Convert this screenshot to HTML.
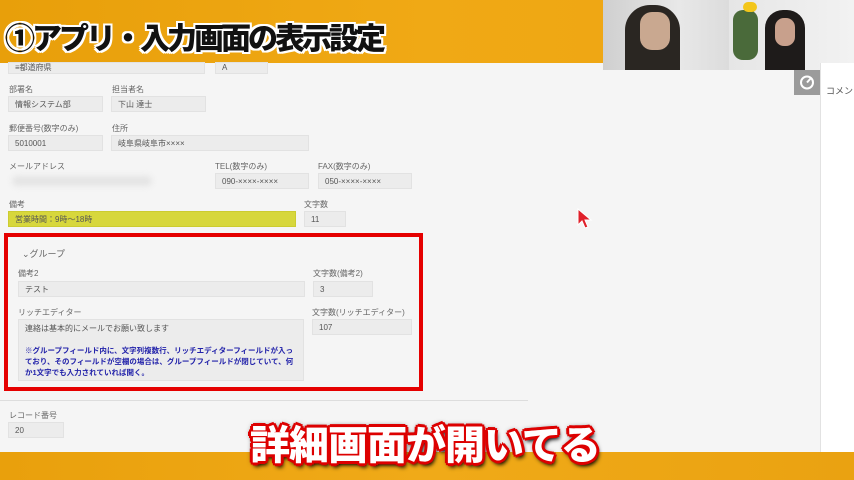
<!DOCTYPE html>
<html><head><meta charset="utf-8"><style>
*{margin:0;padding:0;box-sizing:border-box}
body{width:854px;height:480px;overflow:hidden;background:#f5f5f5;font-family:"Liberation Sans","Noto Sans CJK JP",sans-serif;position:relative;color:#555}
.a{position:absolute}
.lb{position:absolute;font-size:8px;color:#666}
.in{position:absolute;background:#ececec;border:1px solid #e2e2e2;font-size:8px;color:#555;padding:4px 6px;line-height:8px}
.ttl{font-weight:900;color:#111;text-shadow:-2px -2px 0 #fff,2px -2px 0 #fff,-2px 2px 0 #fff,2px 2px 0 #fff,0 2px 0 #fff,0 -2px 0 #fff,2px 0 0 #fff,-2px 0 0 #fff}
.cap{font-weight:900;color:#fff;text-shadow:-2px -2px 0 #d00,2px -2px 0 #d00,-2px 2px 0 #d00,2px 2px 0 #d00,0 3px 0 #d00,0 -3px 0 #d00,3px 0 0 #d00,-3px 0 0 #d00,0 0 6px #000,2px 4px 4px #000}
</style></head><body>
<div class="a" style="left:0;top:0;width:854px;height:63px;background:linear-gradient(90deg,#e89f0a,#f0a915 50%,#eda412)"></div>
<div class="a ttl" style="left:5px;top:14px;font-size:30px;letter-spacing:-3px;white-space:nowrap">①アプリ・入力画面の表示設定</div>
<div class="a" style="left:603px;top:0;width:126px;height:70px;background:linear-gradient(90deg,#cfcfcf,#e8e8e8 60%,#dcdcdc)"></div>
<div class="a" style="left:625px;top:5px;width:55px;height:65px;background:#2a2622;border-radius:25px 25px 0 0"></div>
<div class="a" style="left:640px;top:12px;width:30px;height:38px;background:#c9a890;border-radius:12px"></div>
<div class="a" style="left:729px;top:0;width:125px;height:70px;background:linear-gradient(90deg,#e6e6e6,#f2f2f2)"></div>
<div class="a" style="left:733px;top:10px;width:25px;height:50px;background:#4a6a3a;border-radius:10px"></div>
<div class="a" style="left:765px;top:10px;width:40px;height:60px;background:#1e1b1a;border-radius:18px 18px 0 0"></div>
<div class="a" style="left:775px;top:18px;width:20px;height:28px;background:#c8a08c;border-radius:9px"></div>
<div class="a" style="left:743px;top:2px;width:14px;height:10px;background:#f3c61a;border-radius:6px"></div>
<div class="a" style="left:820px;top:63px;width:34px;height:389px;background:#fff;border-left:1px solid #e2e2e2"></div>
<div class="a" style="left:826px;top:84px;font-size:9px;color:#555;white-space:nowrap">コメント</div>
<div class="a" style="left:794px;top:70px;width:26px;height:25px;background:#9b9b9b"><svg width="26" height="25"><circle cx="13" cy="12.5" r="6" stroke="#fff" stroke-width="2" fill="none"/><path d="M13 12.5 L17 8" stroke="#fff" stroke-width="2"/></svg></div>

<div class="in" style="left:8px;top:62px;width:197px;height:12px;padding-top:1px">≡都道府県</div>
<div class="in" style="left:215px;top:62px;width:53px;height:12px;padding-top:1px">A</div>

<div class="lb" style="left:9px;top:84px">部署名</div><div class="lb" style="left:112px;top:84px">担当者名</div>
<div class="in" style="left:8px;top:96px;width:95px;height:16px">情報システム部</div>
<div class="in" style="left:111px;top:96px;width:95px;height:16px">下山 達士</div>

<div class="lb" style="left:9px;top:123px">郵便番号(数字のみ)</div><div class="lb" style="left:112px;top:123px">住所</div>
<div class="in" style="left:8px;top:135px;width:95px;height:16px">5010001</div>
<div class="in" style="left:111px;top:135px;width:198px;height:16px">岐阜県岐阜市××××</div>

<div class="lb" style="left:9px;top:161px">メールアドレス</div><div class="lb" style="left:215px;top:161px">TEL(数字のみ)</div><div class="lb" style="left:318px;top:161px">FAX(数字のみ)</div>
<div class="a" style="left:12px;top:176px;width:140px;height:10px;background:#e4e4e4;border-radius:6px;filter:blur(3px)"></div>
<div class="in" style="left:215px;top:173px;width:94px;height:16px">090-××××-××××</div>
<div class="in" style="left:318px;top:173px;width:94px;height:16px">050-××××-××××</div>

<div class="lb" style="left:9px;top:199px">備考</div><div class="lb" style="left:304px;top:199px">文字数</div>
<div class="in" style="left:8px;top:211px;width:288px;height:16px;background:#d7d73c;border-color:#cccc30;color:#555">営業時間：9時～18時</div>
<div class="in" style="left:304px;top:211px;width:42px;height:16px">11</div>

<div class="a" style="left:4px;top:233px;width:419px;height:158px;border:4px solid #e50000;background:#f5f5f5"></div>
<div class="lb" style="left:22px;top:247px;font-size:9px">⌄グループ</div>
<div class="lb" style="left:18px;top:268px">備考2</div><div class="lb" style="left:313px;top:268px">文字数(備考2)</div>
<div class="in" style="left:18px;top:281px;width:287px;height:16px">テスト</div>
<div class="in" style="left:313px;top:281px;width:60px;height:16px">3</div>
<div class="lb" style="left:18px;top:307px">リッチエディター</div><div class="lb" style="left:312px;top:307px">文字数(リッチエディター)</div>
<div class="in" style="left:18px;top:319px;width:286px;height:62px;line-height:11px;padding-top:3px">連絡は基本的にメールでお願い致します<br><br><b style="color:#2222aa;font-size:7.5px">※グループフィールド内に、文字列複数行、リッチエディターフィールドが入っており、そのフィールドが空欄の場合は、グループフィールドが閉じていて、何か1文字でも入力されていれば開く。</b></div>
<div class="in" style="left:312px;top:319px;width:100px;height:16px">107</div>

<div class="a" style="left:0;top:400px;width:528px;height:1px;background:#ddd"></div>
<div class="lb" style="left:9px;top:410px">レコード番号</div>
<div class="in" style="left:8px;top:422px;width:56px;height:16px">20</div>

<svg class="a" style="left:577px;top:208px" width="16" height="22"><path d="M1 1 L1 17 L5 13 L8 20 L11 19 L8 12 L14 12 Z" fill="#e0202a" stroke="#fff" stroke-width="1"/></svg>

<div class="a" style="left:0;top:452px;width:854px;height:28px;background:linear-gradient(90deg,#e9a00c,#f0aa18 50%,#eaa211)"></div>
<div class="a cap" style="left:250px;top:422px;font-size:40px;letter-spacing:-1px;white-space:nowrap;line-height:48px">詳細画面が開いてる</div>
</body></html>
